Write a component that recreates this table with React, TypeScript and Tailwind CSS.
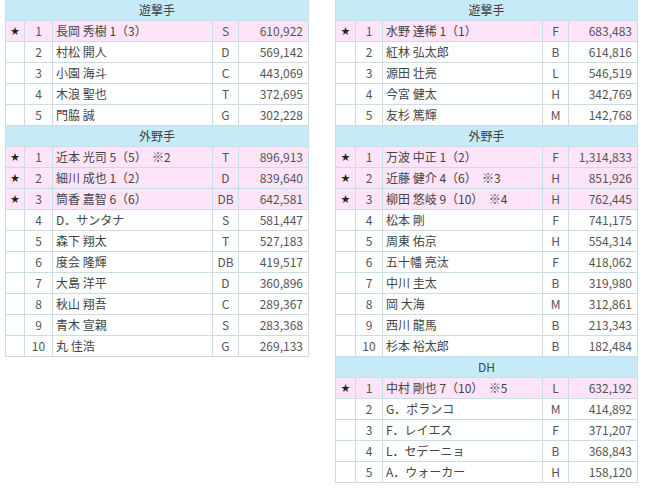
import React from 'react';

type Row = [boolean, number, string, string, string];

interface Section {
  title: string;
  rows: Row[];
}

const leftTable: Section[] = [
  {
    title: '遊撃手',
    rows: [
      [true, 1, '長岡 秀樹 1（3）', 'S', '610,922'],
      [false, 2, '村松 開人', 'D', '569,142'],
      [false, 3, '小園 海斗', 'C', '443,069'],
      [false, 4, '木浪 聖也', 'T', '372,695'],
      [false, 5, '門脇 誠', 'G', '302,228'],
    ],
  },
  {
    title: '外野手',
    rows: [
      [true, 1, '近本 光司 5（5）  ※2', 'T', '896,913'],
      [true, 2, '細川 成也 1（2）', 'D', '839,640'],
      [true, 3, '筒香 嘉智 6（6）', 'DB', '642,581'],
      [false, 4, 'D．サンタナ', 'S', '581,447'],
      [false, 5, '森下 翔太', 'T', '527,183'],
      [false, 6, '度会 隆輝', 'DB', '419,517'],
      [false, 7, '大島 洋平', 'D', '360,896'],
      [false, 8, '秋山 翔吾', 'C', '289,367'],
      [false, 9, '青木 宣親', 'S', '283,368'],
      [false, 10, '丸 佳浩', 'G', '269,133'],
    ],
  },
];

const rightTable: Section[] = [
  {
    title: '遊撃手',
    rows: [
      [true, 1, '水野 達稀 1（1）', 'F', '683,483'],
      [false, 2, '紅林 弘太郎', 'B', '614,816'],
      [false, 3, '源田 壮亮', 'L', '546,519'],
      [false, 4, '今宮 健太', 'H', '342,769'],
      [false, 5, '友杉 篤輝', 'M', '142,768'],
    ],
  },
  {
    title: '外野手',
    rows: [
      [true, 1, '万波 中正 1（2）', 'F', '1,314,833'],
      [true, 2, '近藤 健介 4（6）  ※3', 'H', '851,926'],
      [true, 3, '柳田 悠岐 9（10）  ※4', 'H', '762,445'],
      [false, 4, '松本 剛', 'F', '741,175'],
      [false, 5, '周東 佑京', 'H', '554,314'],
      [false, 6, '五十幡 亮汰', 'F', '418,062'],
      [false, 7, '中川 圭太', 'B', '319,980'],
      [false, 8, '岡 大海', 'M', '312,861'],
      [false, 9, '西川 龍馬', 'B', '213,343'],
      [false, 10, '杉本 裕太郎', 'B', '182,484'],
    ],
  },
  {
    title: 'DH',
    rows: [
      [true, 1, '中村 剛也 7（10）  ※5', 'L', '632,192'],
      [false, 2, 'G．ポランコ', 'M', '414,892'],
      [false, 3, 'F．レイエス', 'F', '371,207'],
      [false, 4, 'L．セデーニョ', 'B', '368,843'],
      [false, 5, 'A．ウォーカー', 'H', '158,120'],
    ],
  },
];

function VoteTable({ sections, wide }: { sections: Section[]; wide?: boolean }) {
  const cell = 'border border-[#c8dee4] p-0 leading-[20px]';
  return (
    <table className={`border-collapse table-fixed ${wide ? 'w-[304px]' : 'w-[303px]'}`}>
      <colgroup>
        <col className={wide ? 'w-[19px]' : 'w-[20px]'} />
        <col className={wide ? 'w-[28px]' : 'w-[27px]'} />
        <col className="w-[160px]" />
        <col className="w-[26px]" />
        <col />
      </colgroup>
      <tbody>
        {sections.map((section) => (
          <React.Fragment key={section.title}>
            <tr className="bg-[#c6eaf8]">
              <td colSpan={5} className={`${cell} text-center text-[#444]`}>
                {section.title}
              </td>
            </tr>
            {section.rows.map(([star, rank, name, pos, amount]) => (
              <tr key={section.title + rank} className={star ? 'bg-[#fde4f8]' : 'bg-white'}>
                <td className={`${cell} text-center text-[9px] text-[#222]`}>{star ? '★' : ''}</td>
                <td className={`${cell} text-center`}>{rank}</td>
                <td className={`${cell} pl-[3px] whitespace-pre overflow-hidden text-[#444]`}>{name}</td>
                <td className={`${cell} text-center`}>{pos}</td>
                <td className={`${cell} text-right pr-[5px]`}>{amount}</td>
              </tr>
            ))}
          </React.Fragment>
        ))}
      </tbody>
    </table>
  );
}

export default function App() {
  return (
    <div
      className="w-[645px] h-[491px] bg-white overflow-hidden text-[12px] text-[#555]"
      style={{ fontFamily: '"Noto Sans CJK JP", "Noto Sans", sans-serif' }}
    >
      <div className="flex items-start gap-[26px] pl-[5px] -mt-px">
        <VoteTable sections={leftTable} wide />
        <VoteTable sections={rightTable} />
      </div>
    </div>
  );
}
